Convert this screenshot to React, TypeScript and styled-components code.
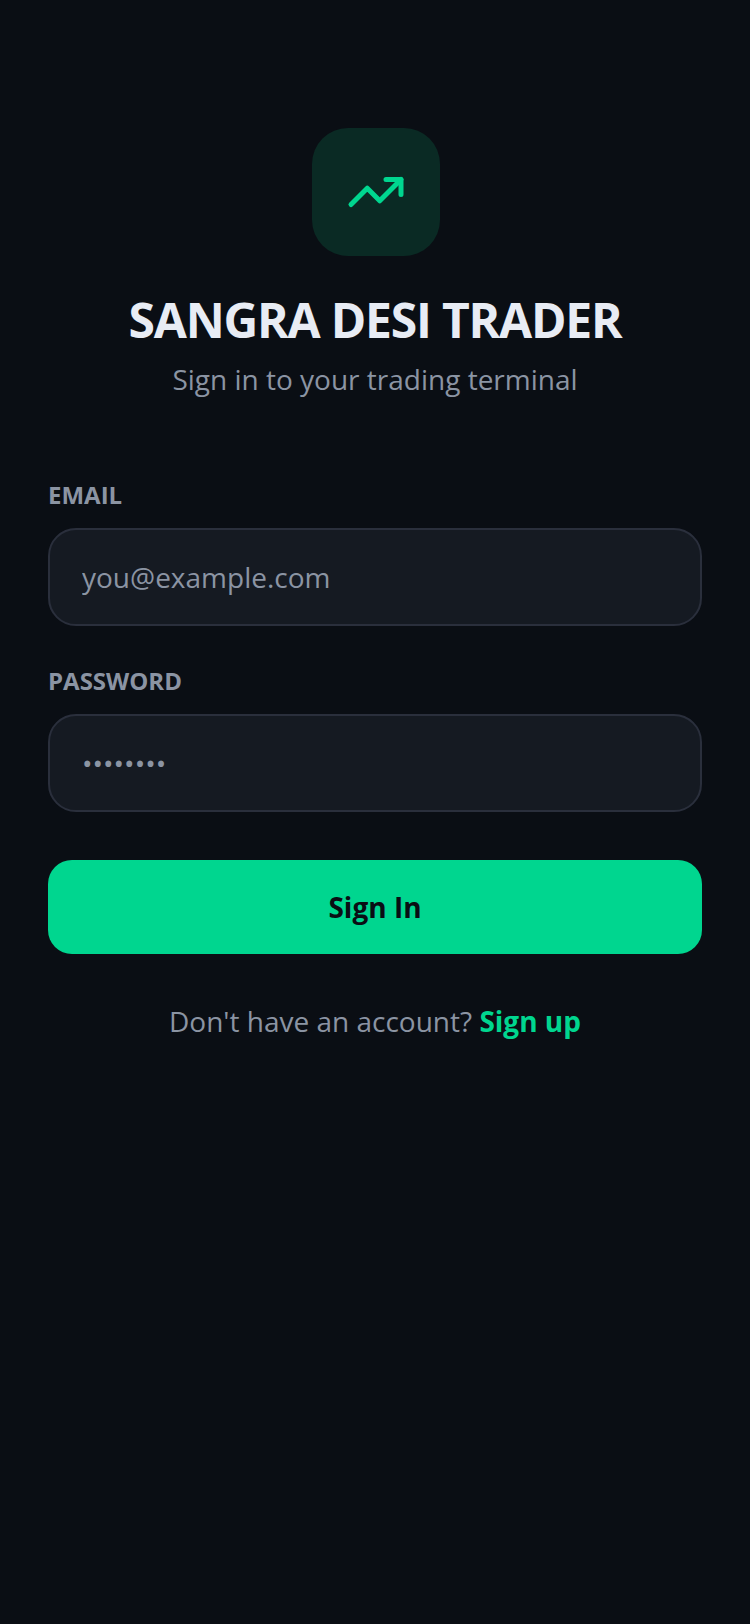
import styled, { createGlobalStyle } from "styled-components";

const GlobalStyle = createGlobalStyle`
  html, body {
    margin: 0;
    padding: 0;
    background: #0a0e14;
  }

  * {
    box-sizing: border-box;
  }
`;

export default function App(): JSX.Element {
  return (
    <Page>
      <GlobalStyle />
      <Header>
        <LogoTile>
          <svg width="60" height="60" viewBox="0 0 24 24" fill="none" stroke="currentColor" strokeWidth="2" strokeLinecap="round" strokeLinejoin="round">
            <polyline points="22 7 13.5 15.5 8.5 10.5 2 17" />
            <polyline points="16 7 22 7 22 13" />
          </svg>
        </LogoTile>
        <Title>SANGRA DESI TRADER</Title>
        <Subtitle>Sign in to your trading terminal</Subtitle>
      </Header>
      <Form>
        <Field>
          <Label htmlFor="email">EMAIL</Label>
          <Input id="email" type="email" placeholder="you@example.com" />
        </Field>
        <Field>
          <Label htmlFor="password">PASSWORD</Label>
          <Input id="password" type="password" placeholder="••••••••" />
        </Field>
        <SubmitButton type="button">Sign In</SubmitButton>
      </Form>
      <Footer>
        Don't have an account? <SignUp>Sign up</SignUp>
      </Footer>
    </Page>
  );
}

const Page = styled.div`
  min-height: 1624px;
  padding: 128px 48px 0;
  background: #0a0e14;
  font-family: "Open Sans", "Noto Sans", sans-serif;
`;

const Header = styled.div`
  display: flex;
  flex-direction: column;
  align-items: center;
`;

const LogoTile = styled.div`
  width: 128px;
  height: 128px;
  margin-left: 2px;
  display: flex;
  align-items: center;
  justify-content: center;
  border-radius: 36px;
  background: #0a2a24;
  color: #00d68f;
`;

const Title = styled.h1`
  margin: 32px 0 0;
  font-size: 48px;
  line-height: 64px;
  font-weight: 700;
  letter-spacing: -1.2px;
  color: #e8ecf4;
`;

const Subtitle = styled.p`
  margin: 3px 0 0;
  font-size: 28px;
  line-height: 48px;
  font-weight: 400;
  color: #8b94a3;
`;

const Form = styled.form`
  display: flex;
  flex-direction: column;
  margin-top: 76px;
`;

const Field = styled.div`
  display: flex;
  flex-direction: column;
  gap: 17px;
  margin-bottom: 39px;
`;

const Label = styled.label`
  font-size: 24px;
  line-height: 32px;
  font-weight: 700;
  color: #8b94a3;
`;

const Input = styled.input`
  width: 100%;
  height: 98px;
  padding: 0 32px;
  border: 2px solid #2a2f3c;
  border-radius: 28px;
  background: #151a22;
  font-family: inherit;
  font-size: 28px;
  color: #e8ecf4;
  outline: none;

  &::placeholder {
    color: #8b94a3;
    opacity: 1;
  }
`;

const SubmitButton = styled.button`
  height: 94px;
  margin-top: 9px;
  border: none;
  border-radius: 24px;
  background: #00d68f;
  font-family: inherit;
  font-size: 28px;
  font-weight: 700;
  color: #0a0e14;
`;

const Footer = styled.p`
  margin: 43px 0 0;
  text-align: center;
  font-size: 28px;
  line-height: 48px;
  color: #8b94a3;
`;

const SignUp = styled.span`
  font-weight: 700;
  color: #00d68f;
`;
